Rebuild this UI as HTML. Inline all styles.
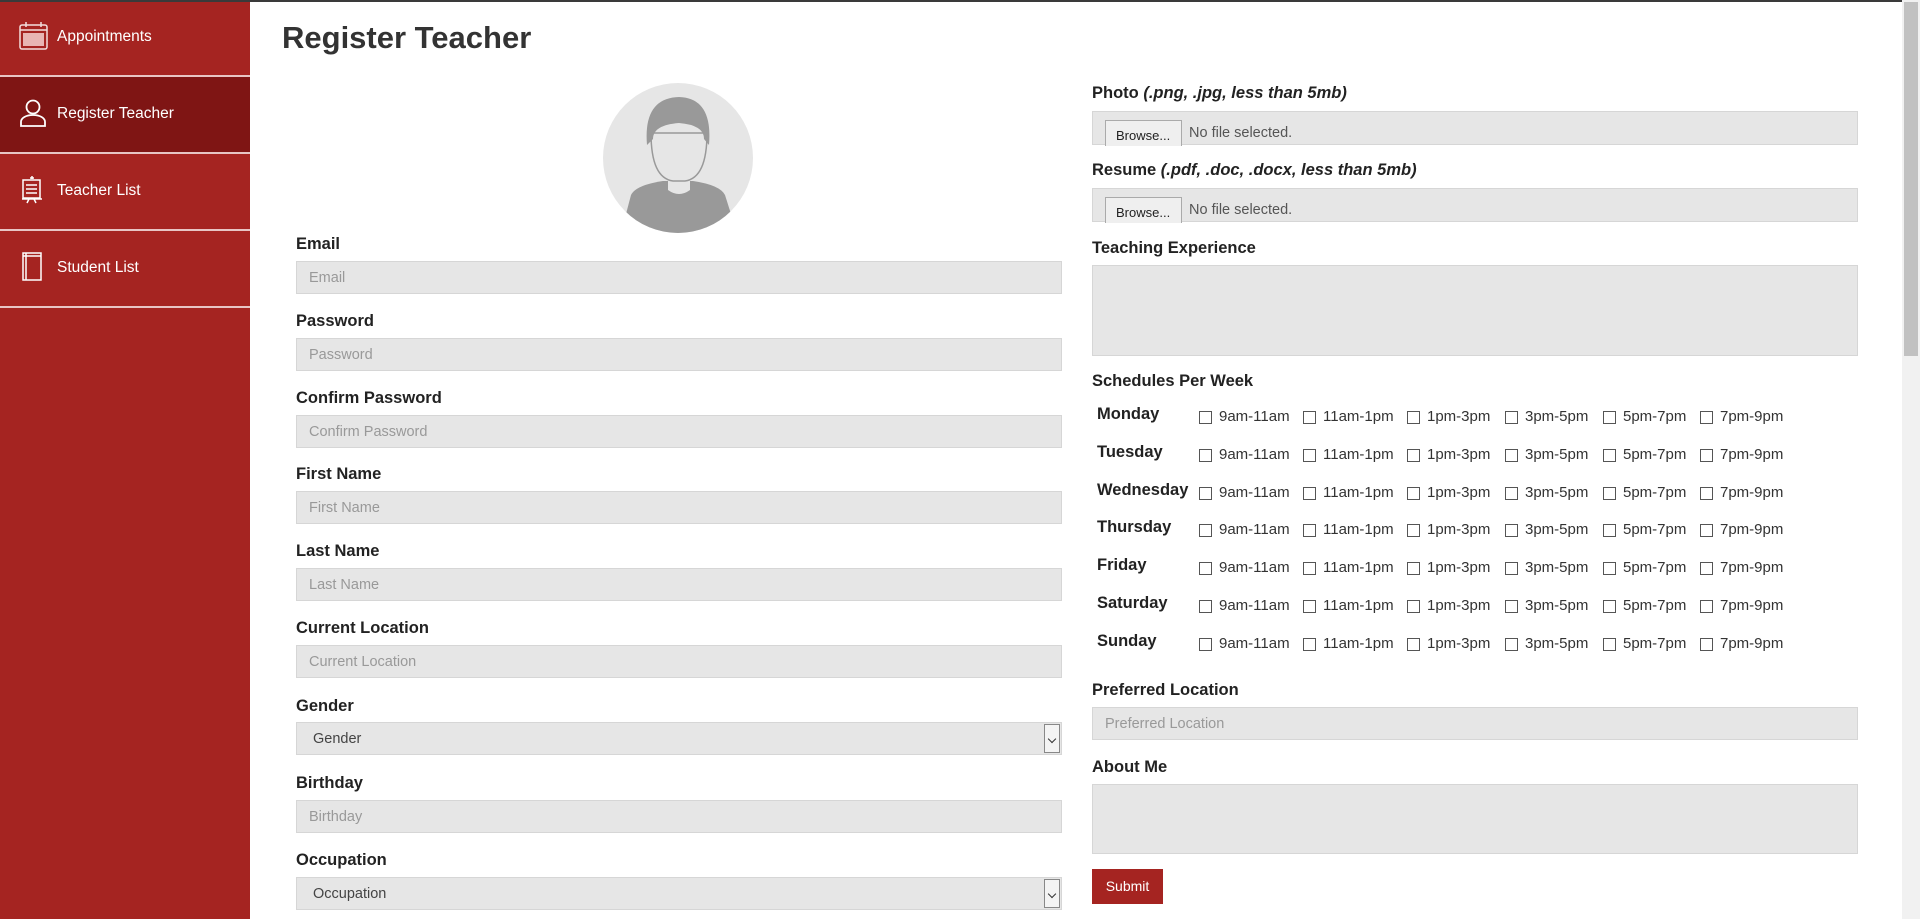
<!DOCTYPE html>
<html><head><meta charset="utf-8"><style>
*{box-sizing:border-box;margin:0;padding:0}
body{width:1920px;height:919px;overflow:hidden;background:#fff;font-family:"Liberation Sans",sans-serif;color:#333;position:relative}
.topline{position:absolute;left:0;top:0;width:1920px;height:2px;background:#3a3a3a}
.side{position:absolute;left:0;top:0;width:250px;height:919px;background:#a52421}
.nav{position:absolute;left:0;width:250px;height:77px;border-bottom:2px solid #e8c5c4;color:#fff;font-size:15.5px}
.nav span{position:absolute;left:57px;top:28px}
.nav svg{position:absolute;left:19px;top:21px}
.t{position:absolute;font-weight:bold}
.lab{position:absolute;font-weight:bold;font-size:16.5px;color:#222}
.inp{position:absolute;height:33px;background:#e6e6e6;border:1px solid #d6d6d6;color:#999;font-size:14.5px;padding:8px 12px}
.sel{color:#444;padding-left:16px}
.arr{position:absolute;right:1px;top:1px;width:16px;height:29px;border:1px solid #888;background:#f4f4f4}
.arr:after{content:"";position:absolute;left:4px;top:11px;width:5px;height:5px;border-right:1.5px solid #333;border-bottom:1.5px solid #333;transform:rotate(45deg)}
.file{position:absolute;height:34px;background:#e6e6e6;border:1px solid #d6d6d6}
.brw{position:absolute;left:12px;top:8px;width:77px;height:26px;border:1px solid #aaa;border-bottom:none;background:#efefef;font-size:13px;color:#222;padding:7px 0 0 10px}
.nf{position:absolute;left:96px;top:13px;font-size:14.5px;color:#555}
.day{position:absolute;left:1097px;font-weight:bold;font-size:16.5px;color:#222}
.cb{position:absolute;width:13px;height:13px;border:1px solid #555;background:#fff}
.ct{position:absolute;font-size:15px;color:#333}
</style></head><body>
<div class="side">
 <div class="nav" style="top:0"><svg width="30" height="30" viewBox="0 0 30 30" fill="none" stroke="#f3dede" stroke-width="1.5"><rect x="1" y="4" width="27" height="24" rx="2"/><line x1="1" y1="9" x2="28" y2="9"/><path d="M7 1v5M22 1v5"/><g fill="#e8b5b3" stroke="none"><rect x="4" y="12" width="21" height="13"/></g></svg><span>Appointments</span></div>
 <div class="nav" style="top:77px;background:#7f1514"><svg width="30" height="30" viewBox="0 0 30 30" fill="none" stroke="#fff" stroke-width="1.8"><circle cx="14" cy="9" r="6.5"/><path d="M2 28v-4c0-4 5-7 12-7s12 3 12 7v4z"/></svg><span>Register Teacher</span></div>
 <div class="nav" style="top:154px"><svg width="30" height="30" viewBox="0 0 30 30" fill="none" stroke="#fff" stroke-width="1.5"><path d="M11 3h4M13 1v3"/><rect x="4" y="5" width="17" height="18"/><path d="M7 10h11M7 14h11M7 18h11M3 24h20M10 24l-2 4M15 24l2 4"/></svg><span>Teacher List</span></div>
 <div class="nav" style="top:231px"><svg width="30" height="30" viewBox="0 0 30 30" fill="none" stroke="#fff" stroke-width="1.5"><rect x="4" y="1" width="18" height="27"/><path d="M7 1v27M4 4h18"/></svg><span>Student List</span></div>
</div>
<div class="topline"></div>
<div class="t" style="left:282px;top:20px;font-size:31px;color:#333">Register Teacher</div>
<svg style="position:absolute;left:603px;top:83px" width="150" height="150" viewBox="0 0 150 150"><defs><clipPath id="c"><circle cx="75" cy="75" r="75"/></clipPath></defs><circle cx="75" cy="75" r="75" fill="#e6e6e6"/><g clip-path="url(#c)"><path d="M18 150L28 112Q33 102 60 98L90 98Q117 102 122 112L134 150Z" fill="#999"/><path d="M65 85h22v22q-11 8-22 0z" fill="#e6e6e6"/><path d="M48 50Q48 95 70 98L82 98Q104 95 104 50Z" fill="#e6e6e6" stroke="#999" stroke-width="1.5"/><path d="M44 62Q40 15 76 14Q110 15 106 62L101 56Q101 42 76 40Q50 42 50 56Z" fill="#999"/></g></svg>

<div class="lab" style="left:296px;top:235px">Email</div><div class="inp" style="left:296px;top:261px;width:766px">Email</div>
<div class="lab" style="left:296px;top:312px">Password</div><div class="inp" style="left:296px;top:338px;width:766px">Password</div>
<div class="lab" style="left:296px;top:389px">Confirm Password</div><div class="inp" style="left:296px;top:415px;width:766px">Confirm Password</div>
<div class="lab" style="left:296px;top:465px">First Name</div><div class="inp" style="left:296px;top:491px;width:766px">First Name</div>
<div class="lab" style="left:296px;top:542px">Last Name</div><div class="inp" style="left:296px;top:568px;width:766px">Last Name</div>
<div class="lab" style="left:296px;top:619px">Current Location</div><div class="inp" style="left:296px;top:645px;width:766px">Current Location</div>
<div class="lab" style="left:296px;top:697px">Gender</div><div class="inp sel" style="left:296px;top:722px;width:766px">Gender<div class="arr"></div></div>
<div class="lab" style="left:296px;top:774px">Birthday</div><div class="inp" style="left:296px;top:800px;width:766px">Birthday</div>
<div class="lab" style="left:296px;top:851px">Occupation</div><div class="inp sel" style="left:296px;top:877px;width:766px">Occupation<div class="arr"></div></div>

<div class="lab" style="left:1092px;top:84px">Photo <i>(.png, .jpg, less than 5mb)</i></div>
<div class="file" style="left:1092px;top:111px;width:766px"><div class="brw">Browse...</div><div class="nf">No file selected.</div></div>
<div class="lab" style="left:1092px;top:161px">Resume <i>(.pdf, .doc, .docx, less than 5mb)</i></div>
<div class="file" style="left:1092px;top:188px;width:766px"><div class="brw">Browse...</div><div class="nf">No file selected.</div></div>
<div class="lab" style="left:1092px;top:239px">Teaching Experience</div>
<div class="inp" style="left:1092px;top:265px;width:766px;height:91px"></div>
<div class="lab" style="left:1092px;top:372px">Schedules Per Week</div>

<div id="sch"></div>
<script>
var days=["Monday","Tuesday","Wednesday","Thursday","Friday","Saturday","Sunday"];
var xs=[1199,1303,1407,1505,1603,1700],ls=["9am-11am","11am-1pm","1pm-3pm","3pm-5pm","5pm-7pm","7pm-9pm"];
var h="";
days.forEach(function(d,i){var y=Math.round(415+i*37.8);
h+='<div class="day" style="top:'+(y-10)+'px">'+d+'</div>';
xs.forEach(function(x,j){h+='<div class="cb" style="left:'+x+'px;top:'+(y-4)+'px"></div><div class="ct" style="left:'+(x+20)+'px;top:'+(y-7)+'px">'+ls[j]+'</div>';});});
document.getElementById("sch").innerHTML=h;
</script>

<div class="lab" style="left:1092px;top:681px">Preferred Location</div><div class="inp" style="left:1092px;top:707px;width:766px">Preferred Location</div>
<div class="lab" style="left:1092px;top:758px">About Me</div><div class="inp" style="left:1092px;top:784px;width:766px;height:70px"></div>
<div style="position:absolute;left:1092px;top:869px;width:71px;height:35px;background:#a52421;color:#fff;font-size:14px;text-align:center;line-height:35px">Submit</div>

<div style="position:absolute;left:1902px;top:0;width:18px;height:919px;background:#f1f1f1"></div>
<div style="position:absolute;left:1904px;top:2px;width:14px;height:354px;background:#c1c1c1"></div>
</body></html>
